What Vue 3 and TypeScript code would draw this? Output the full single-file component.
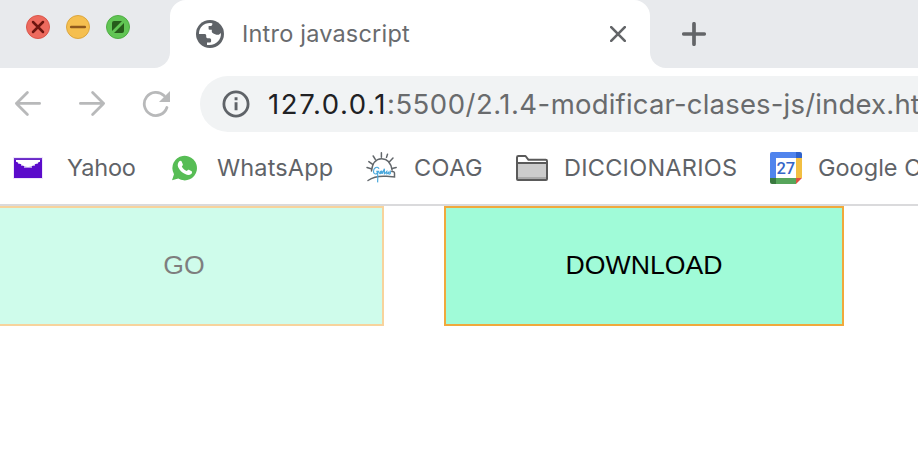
<script setup lang="ts">
interface Bookmark {
  id: string
  label: string
}

const bookmarks: Bookmark[] = [
  { id: 'yahoo', label: 'Yahoo' },
  { id: 'whatsapp', label: 'WhatsApp' },
  { id: 'coag', label: 'COAG' },
  { id: 'folder', label: 'DICCIONARIOS' },
  { id: 'calendar', label: 'Google Calendar' },
]
</script>

<template>
  <div class="window">
    <header class="tabs">
      <div class="controls">
        <svg class="light" viewBox="0 0 24 24">
          <circle cx="12" cy="12" r="11.5" fill="#ed6a5e" stroke="#d9564b" />
          <path d="M7 7l10 10M17 7L7 17" stroke="#6e1610" stroke-width="2.5" stroke-linecap="round" />
        </svg>
        <svg class="light" viewBox="0 0 24 24">
          <circle cx="12" cy="12" r="11.5" fill="#f5bf4f" stroke="#dba63f" />
          <path d="M5.2 12h13.6" stroke="#8f591d" stroke-width="2.6" stroke-linecap="round" />
        </svg>
        <svg class="light" viewBox="0 0 24 24">
          <circle cx="12" cy="12" r="11.5" fill="#61c554" stroke="#50ad45" />
          <path d="M6 16V8q0-2 2-2h8zM18 8v8q0 2-2 2H8z" fill="#265c1b" />
        </svg>
      </div>
      <div class="tab-wrap">
        <div class="tab">
          <svg class="globe" viewBox="0 0 28 28">
            <circle cx="14" cy="14" r="14" fill="#5f6368" />
            <path d="M3 13.2C3.2 7.5 7.5 3.1 14 3L16.3 3.3V4.4Q16.3 5.8 14.8 6H12.6V8.7Q12.6 9.6 13.6 9.8H15.8V11.8Q16 13 17.4 13.6L20.3 14.7H22.8L24.9 12.9C25.5 19 20.5 25.2 13 25H11V22.4H14.2Q15.1 22.2 15.1 21.2V19.8Q15.1 18.4 13.6 18.3H11.4Q10.2 18 10.2 16.8V15.2Q10 14 8.6 14H3Z" fill="#fff" />
          </svg>
          <span class="title">Intro javascript</span>
          <svg class="close" viewBox="0 0 16 16">
            <path d="M1.2 1.2l13.6 13.6M14.8 1.2L1.2 14.8" stroke="#636568" stroke-width="2.6" stroke-linecap="round" />
          </svg>
        </div>
      </div>
      <div class="rest">
        <svg class="plus" viewBox="0 0 24 24">
          <path d="M12 1.8v20.4M1.8 12h20.4" stroke="#636568" stroke-width="3.7" stroke-linecap="round" />
        </svg>
      </div>
    </header>

    <nav class="toolbar">
      <svg class="nav-icon" viewBox="0 0 28 28">
        <path d="M25.6 13.4H2.4M13.4 2.4L2.4 13.4L13.4 24.4" />
      </svg>
      <svg class="nav-icon" viewBox="0 0 28 28">
        <path d="M2.4 13.4H25.6M14.6 2.4L25.6 13.4L14.6 24.4" />
      </svg>
      <svg class="nav-icon reload" viewBox="0 0 28 28">
        <path d="M24.9 17.5A11.6 11.6 0 1 1 22.2 5.8" />
        <path class="solid" d="M28 1V12H17Z" />
      </svg>
      <div class="address">
        <svg class="info" viewBox="0 0 28 28">
          <circle cx="14" cy="14" r="12.1" fill="none" stroke="#5f6368" stroke-width="2.8" />
          <path d="M12.6 7.3h2.9v2.9h-2.9zM12.6 12.3h2.9v8h-2.9z" fill="#5f6368" />
        </svg>
        <span class="url"><span class="host">127.0.0.1</span><span class="port">:5500/2.1.4-</span>modificar-clases-js/index.html</span>
      </div>
    </nav>

    <div class="bookmarks">
      <div v-for="item in bookmarks" :key="item.id" class="bookmark" :class="item.id">
        <svg v-if="item.id === 'yahoo'" class="icon" viewBox="0 0 32 32">
          <path d="M1 5h30v22H1z" fill="#eee6fb" />
          <path d="M2 6h28v20H2z" fill="#5b0bcb" />
          <path d="M2 6h28v1.7H2z" fill="#7135cb" />
          <path d="M4 8h24v2h-2v2h-3v2h-3v2h-8v-2H9v-2H6v-2H4z" fill="#b79be6" />
          <path d="M4 8h24v1.4L19.5 14.2Q16 15.8 12.5 14.2L4 9.4z" fill="#fff" />
        </svg>
        <svg v-else-if="item.id === 'whatsapp'" class="icon" viewBox="0 0 32 32">
          <path d="M4 28.3L6 22.2A12.3 12.3 0 1 1 10.3 26.6Z" fill="#57bd55" />
          <path d="M11.3 9.2c.7-.7 1.8-.7 2.2.1l1.3 2.9c.3.8-.2 1.4-1 2.3 1.1 2.3 2.8 3.7 5 4.6.8-1.1 1.3-1.7 2.1-1.3l2.7 1.4c.9.5.4 2.1-.4 2.8-1.6 1.3-3.5 1.3-6.1.1-3.2-1.5-5.6-3.9-6.9-6.8-1-2.4-.3-4.8 1.1-6.1z" fill="#fff" />
        </svg>
        <svg v-else-if="item.id === 'coag'" class="icon" viewBox="0 0 32 32">
          <g fill="none" stroke="#62676b" stroke-width="1.5" stroke-linecap="round">
            <path d="M5.5 19C6.3 11.5 10 7 15.5 6.8C21.8 6.7 25 11.7 26.1 18.2M25.8 19.5c2.1-.2 3 .5 2.7 2.6v2.8l-7.7-.6C13.2 23.7 7.5 24.7 2 28.5" />
            <path d="M1 15.5l4 1.2M2.8 9.6l3.5 2.6M7.2 4l2.1 3.4M15.4.8v4.5M21.5 2.2l-1 3.2M27 6l-3.5 3.7M30.2 15.4l-4.2 1" />
          </g>
          <path d="M13 16.8c-2-3.7-6-.1-5.5 3 .3 3.6 4.7 2.3 5.1-.5l-2.2.1c1.9.3 1.5 5.8 1.2 11M14 20c2.6-2.5 2.7 1.2.2 1.7-1.6-.2.4-2.4 2-1.5v1.5l2.2-5v5.1c1-.2 1.8-1.8 2.4-2.4v2.5c1.3-.1 1-1.4 2.5-2.1-1.3 1.2-.6 3.3 1 1.8v-3" fill="none" stroke="#4aa8dc" stroke-width="1.2" />
        </svg>
        <svg v-else-if="item.id === 'folder'" class="icon" viewBox="0 0 32 32">
          <path d="M1 27V5.4Q1 4 2.4 4H9.5L12.5 7.8H29.8Q31 7.8 31 9V27Q31 28 30 28H2Q1 28 1 27Z" fill="#fff" stroke="#5a5a5a" stroke-width="2" stroke-linejoin="round" />
          <path d="M2 12h28v15H2z" fill="#ccc" />
          <path d="M2 25h28v2H2z" fill="#aaa" />
          <path d="M1 11h30" stroke="#5a5a5a" stroke-width="2" />
        </svg>
        <svg v-else class="icon" viewBox="0 0 32 32">
          <path d="M2 0h24v6H6v20H0V2Q0 0 2 0z" fill="#5084ed" />
          <path d="M26 0h4q2 0 2 2v4h-6z" fill="#2f62cb" />
          <path d="M26 6h6v20h-6z" fill="#f2bf42" />
          <path d="M6 26h20v6H6z" fill="#57a55b" />
          <path d="M0 26h6v6H2q-2 0-2-2z" fill="#39793f" />
          <path d="M26 26h6l-6 6z" fill="#df5043" />
          <path d="M6 6h20v20H6z" fill="#fff" />
          <text x="15.8" y="21.9" text-anchor="middle" class="day">27</text>
        </svg>
        <span class="label">{{ item.label }}</span>
      </div>
    </div>

    <main class="page">
      <button class="action faded">GO</button>
      <button class="action">DOWNLOAD</button>
    </main>
  </div>
</template>

<style>
body {
  margin: 0;
  overflow: hidden;
  background: #fff;
}
</style>

<style scoped>
.window {
  width: 918px;
  height: 470px;
  overflow: hidden;
  background: #fff;
  font-family: Inter, "Liberation Sans", sans-serif;
}
svg {
  display: block;
  flex: none;
}
.tabs {
  display: flex;
  height: 68px;
}
.controls {
  box-sizing: border-box;
  display: flex;
  gap: 16px;
  width: 170px;
  padding: 15px 0 0 26px;
  background: #e8eaed;
  border-bottom-right-radius: 16px;
}
.light {
  width: 24px;
  height: 24px;
}
.tab-wrap {
  width: 480px;
  background: #e8eaed;
}
.tab {
  box-sizing: border-box;
  display: flex;
  align-items: center;
  height: 68px;
  padding: 0 24px 0 26px;
  background: #fff;
  border-radius: 16px 16px 0 0;
}
.globe {
  width: 28px;
  height: 28px;
}
.title {
  flex: 1;
  margin-left: 18px;
  padding-bottom: 2px;
  color: #696b6e;
  font-size: 23.5px;
  letter-spacing: 0.2px;
  white-space: nowrap;
}
.close {
  width: 16px;
  height: 16px;
}
.rest {
  flex: 1;
  padding: 22px 0 0 32px;
  background: #e8eaed;
  border-bottom-left-radius: 16px;
}
.plus {
  width: 24px;
  height: 24px;
}
.toolbar {
  display: flex;
  align-items: center;
  height: 72px;
  padding-left: 14px;
}
.nav-icon {
  width: 28px;
  height: 28px;
  margin-right: 36px;
  fill: none;
  stroke: #b8b9ba;
  stroke-width: 2.8;
  stroke-linecap: round;
  stroke-linejoin: round;
}
.reload {
  margin-right: 30px;
}
.nav-icon .solid {
  fill: #b8b9ba;
  stroke: none;
}
.address {
  flex: 1;
  display: flex;
  align-items: center;
  height: 56px;
  min-width: 0;
  padding-left: 22px;
  overflow: hidden;
  background: #f1f3f4;
  border-radius: 28px 0 0 28px;
}
.info {
  width: 28px;
  height: 28px;
}
.url {
  margin-left: 18px;
  color: #696b6d;
  font-size: 27.5px;
  letter-spacing: 0.18px;
  white-space: nowrap;
}
.host {
  color: #202124;
  letter-spacing: 1.6px;
}
.port {
  letter-spacing: 0.5px;
}
.bookmarks {
  box-sizing: border-box;
  display: flex;
  height: 66px;
  padding: 0 0 8px 12px;
  border-bottom: 2px solid #dadadc;
}
.bookmark {
  flex: none;
  display: flex;
  align-items: center;
  white-space: nowrap;
}
.icon {
  width: 32px;
  height: 32px;
}
.label {
  padding-bottom: 2px;
  color: #5f6368;
  font-size: 23.5px;
}
.yahoo {
  width: 156px;
}
.whatsapp {
  width: 198px;
}
.coag {
  width: 150px;
}
.folder {
  width: 254px;
}
.yahoo .label {
  margin-left: 23px;
  letter-spacing: -0.15px;
}
.whatsapp .label {
  margin-left: 17px;
  letter-spacing: 0.15px;
}
.coag .label {
  margin-left: 16px;
  letter-spacing: 0.4px;
}
.folder .label {
  margin-left: 16px;
  letter-spacing: 0.25px;
}
.calendar .label {
  margin-left: 16px;
}
.day {
  fill: #3566c8;
  font: 500 16.5px Roboto, sans-serif;
}
.page {
  display: flex;
  gap: 60px;
  margin-left: -16px;
}
.action {
  box-sizing: border-box;
  flex: none;
  width: 400px;
  height: 120px;
  padding: 0 0 1px;
  background: #a0fbd8;
  border: 2px solid #f0a93c;
  color: #000;
  font: 26.67px "Liberation Sans", Arial, sans-serif;
}
.faded {
  opacity: 0.5;
}
</style>
